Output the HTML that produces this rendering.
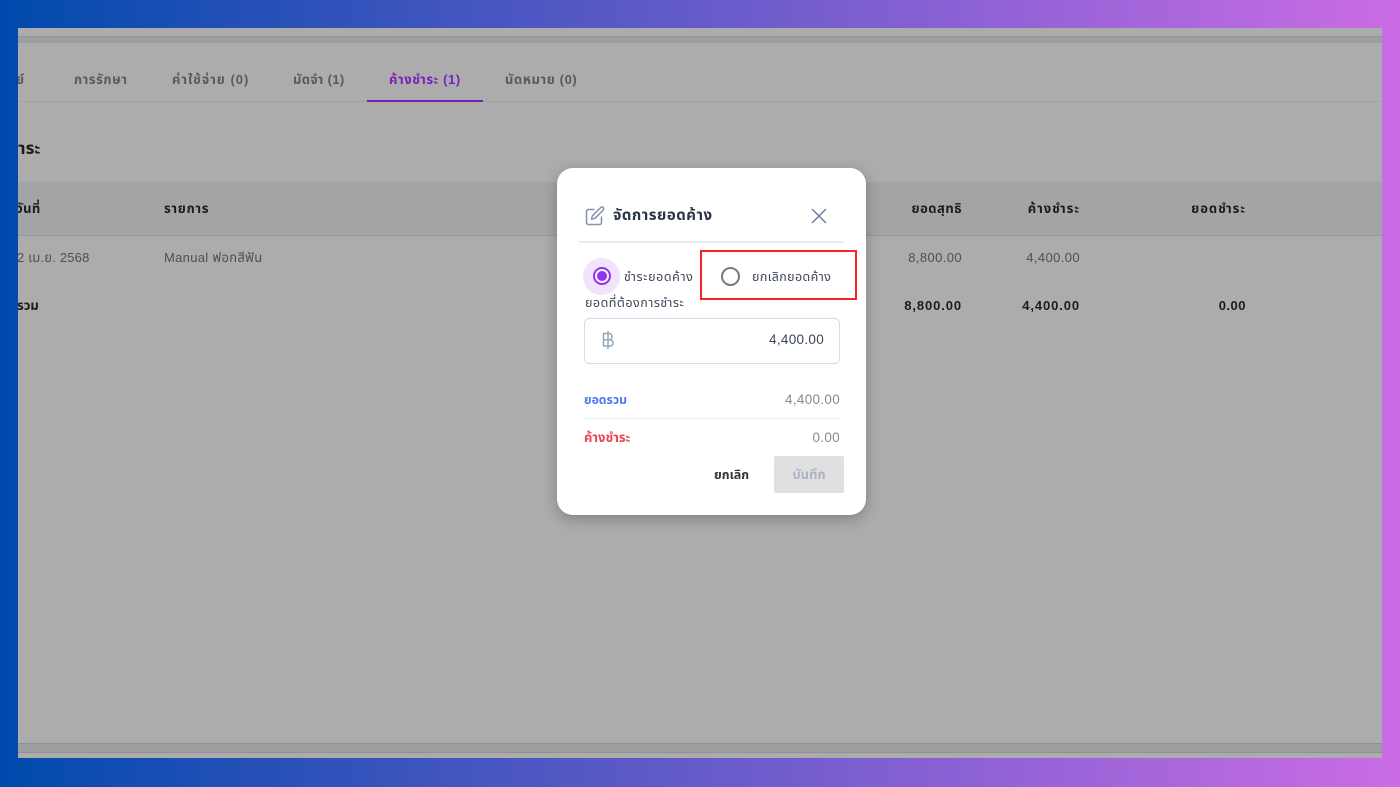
<!DOCTYPE html>
<html lang="th"><head><meta charset="utf-8"><title>จัดการยอดค้าง</title>
<style>
html,body{margin:0;padding:0;width:1400px;height:787px;overflow:hidden}
body{position:relative;font-family:"Liberation Sans","Noto Sans Thai","Noto Sans CJK SC",sans-serif;font-size:13px;background:linear-gradient(90deg,#004aad,#cb6ce6)}
.s{position:absolute;left:18px;top:28px;width:1364px;height:730px;background:#acacac;overflow:hidden}
.b{position:absolute}
.t{position:absolute;white-space:nowrap;line-height:20px;filter:blur(.3px)}
.r{text-align:right}
.tab{color:#5a5a5a;font-weight:bold;top:69.5px}
.th{color:#1c1c1c;font-weight:bold;top:198.5px;letter-spacing:.7px}
.td{color:#4f4f4f;top:248px;letter-spacing:.4px}
.tt{color:#1c1c1c;font-weight:bold;top:296px;letter-spacing:.4px}
.m{color:#3a4657;font-size:12.5px}
</style></head><body>
<div class="s">
<div class="b" style="left:0;top:8px;width:1364px;height:6px;background:#9c9fa0;border-top:1px solid #949596"></div>
<div class="b" style="left:0;top:73px;width:1364px;height:1px;background:#a2a2a2"></div>
<div class="b" style="left:0;top:154px;width:1364px;height:53px;background:#a3a4a6;border-bottom:1px solid #999"></div>
<div class="b" style="left:0;top:715px;width:1364px;height:8px;background:#9c9fa0;border-top:1px solid #909192;border-bottom:1px solid #909192"></div>
</div>
<div class="b" style="left:367px;top:100px;width:116px;height:2px;background:#7b1fb8"></div>
<div style="position:absolute;left:18px;top:0;width:1364px;height:787px;overflow:hidden">
<span class="t tab" style="left:-2px">ย์</span>
<span class="t th" style="left:-2px;letter-spacing:.4px">วันที่</span>
<span class="t td" style="left:-1px;letter-spacing:.2px">2 เม.ย. 2568</span>
<span class="t tt" style="left:-1px;letter-spacing:0">รวม</span>
<span class="t" style="left:-10px;top:139px;font-size:17px;font-weight:bold;color:#1c1c1c">ชำระ</span>
</div>
<span class="t tab" style="left:74px;letter-spacing:.55px">การรักษา</span>
<span class="t tab" style="left:172px;letter-spacing:1px">ค่าใช้จ่าย (0)</span>
<span class="t tab" style="left:293px;letter-spacing:.35px">มัดจำ (1)</span>
<span class="t tab" style="left:389px;color:#7b1fb8;letter-spacing:.6px">ค้างชำระ (1)</span>
<span class="t tab" style="left:505px;letter-spacing:.6px">นัดหมาย (0)</span>
<span class="t th" style="left:164px">รายการ</span>
<span class="t td" style="left:164px;letter-spacing:.3px">Manual ฟอกสีฟัน</span>
<span class="t th r" style="right:438px;letter-spacing:.5px">ยอดสุทธิ</span>
<span class="t th r" style="right:320px;letter-spacing:1px">ค้างชำระ</span>
<span class="t th r" style="right:154px;letter-spacing:1px">ยอดชำระ</span>
<span class="t td r" style="right:438px">8,800.00</span>
<span class="t td r" style="right:320px">4,400.00</span>
<span class="t tt r" style="right:438px;letter-spacing:.9px">8,800.00</span>
<span class="t tt r" style="right:320px;letter-spacing:.9px">4,400.00</span>
<span class="t tt r" style="right:154px;letter-spacing:.5px">0.00</span>

<div class="b" style="left:557px;top:168px;width:309px;height:347px;background:#fff;border-radius:16px;box-shadow:0 4px 14px rgba(0,0,0,.25)"></div>
<svg class="b" style="left:585px;top:206px" width="20" height="20" viewBox="0 0 20 20" fill="none" stroke="#8494ab" stroke-width="1.5" stroke-linecap="round" stroke-linejoin="round"><path d="M9 3.5H3.5a2 2 0 0 0-2 2v11a2 2 0 0 0 2 2h11a2 2 0 0 0 2-2V11"/><path d="M15.6 1.6a1.7 1.7 0 0 1 2.6 2.5L10 12.3l-3.5.9.9-3.4z"/></svg>
<span class="t" style="left:613px;top:206px;font-size:15px;font-weight:bold;color:#2a3547;letter-spacing:.5px">จัดการยอดค้าง</span>
<svg class="b" style="left:811px;top:208px" width="16" height="16" viewBox="0 0 16 16" fill="none" stroke="#6c7f99" stroke-width="1.5" stroke-linecap="round"><path d="M1.5 1.5l13 13M14.5 1.5l-13 13"/></svg>
<div class="b" style="left:579px;top:241px;width:265px;height:2px;background:#e6ecf3"></div>

<div class="b" style="left:583px;top:258px;width:37px;height:37px;border-radius:50%;background:#f1e3fb"></div>
<div class="b" style="left:593px;top:267px;width:14px;height:14px;border:2px solid #9333ea;border-radius:50%;background:#f8f1fd"></div>
<div class="b" style="left:597px;top:271px;width:10px;height:10px;border-radius:50%;background:#9333ea"></div>
<span class="t m" style="left:624px;top:267px;letter-spacing:.6px">ชำระยอดค้าง</span>
<div class="b" style="left:700px;top:250px;width:153px;height:46px;border:2px solid #f5222a"></div>
<div class="b" style="left:721px;top:267px;width:15px;height:15px;border:2px solid #7a7a7a;border-radius:50%"></div>
<span class="t m" style="left:752px;top:267px;letter-spacing:.4px">ยกเลิกยอดค้าง</span>
<span class="t m" style="left:585px;top:293px;letter-spacing:.5px">ยอดที่ต้องการชำระ</span>

<div class="b" style="left:584px;top:318px;width:254px;height:44px;border:1px solid #d5dde8;border-radius:6px;box-shadow:0 0 1px #dbe2ec"></div>
<svg class="b" style="left:600px;top:330px" width="16" height="20" viewBox="0 0 16 20" fill="none" stroke="#94a3bd" stroke-width="1.4"><path d="M3.5 3.5h5.5a3 3 0 0 1 0 6.300H3.500h6.500a3 3 0 0 1 0 6.200H3.500zM8 1v18"/></svg>
<span class="t r" style="right:576px;top:330px;font-size:13.5px;color:#3a4657;letter-spacing:.3px">4,400.00</span>

<span class="t" style="left:584px;top:390px;font-weight:bold;font-size:12.2px;color:#4a7bf0">ยอดรวม</span>
<span class="t r" style="right:560px;top:390px;font-size:13.5px;color:#8a8a8a;letter-spacing:.3px">4,400.00</span>
<div class="b" style="left:584px;top:418px;width:256px;height:1px;background:#e9edf3"></div>
<span class="t" style="left:584px;top:428px;font-weight:bold;font-size:13px;color:#ea4450">ค้างชำระ</span>
<span class="t r" style="right:560px;top:428px;font-size:13.5px;color:#8a8a8a;letter-spacing:.3px">0.00</span>
<span class="t" style="left:714px;top:465px;font-weight:bold;font-size:12.5px;color:#333">ยกเลิก</span>
<div class="b" style="left:774px;top:456px;width:70px;height:37px;background:#e0e0e0;border-radius:2px"></div>
<span class="t" style="left:774px;top:465px;width:70px;text-align:center;font-weight:bold;color:#a9b4c6">บันทึก</span>
</body></html>
